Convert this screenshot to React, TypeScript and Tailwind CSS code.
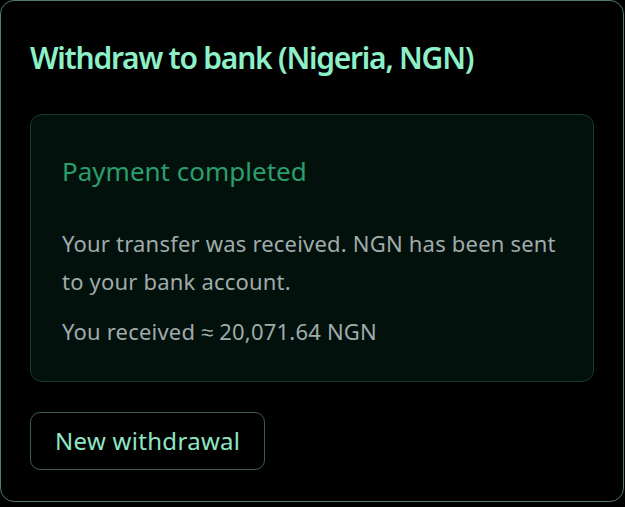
export default function App() {
  return (
    <div className="w-[625px] h-[507px] bg-black font-['Noto_Sans',sans-serif]">
      <div className="w-[624px] h-[502px] rounded-[14px] border border-[#55796b] bg-black px-[29px] pt-[35px]">
        <h1 className="text-[30px] leading-[44px] font-semibold text-[#8ef0c8] tracking-[-1.25px]">
          Withdraw to bank (Nigeria, NGN)
        </h1>

        <div className="mt-[34px] rounded-[12px] border border-[#1b3a2c] bg-[#03110d] px-[31px] pt-[38px] pb-[31px]">
          <h2 className="text-[26px] leading-[36px] text-[#2a9e6b]">Payment completed</h2>
          <p className="mt-[35px] text-[22px] leading-[38px] tracking-[0.2px] text-[#a0abab]">
            Your transfer was received. NGN has been sent to your bank account.
          </p>
          <p className="mt-[12px] text-[22px] leading-[38px] tracking-[0.2px] text-[#a0abab]">
            You received ≈ 20,071.64 NGN
          </p>
        </div>

        <button className="mt-[30px] h-[58px] rounded-[10px] border border-[#3e5d50] px-[24px] text-[24px] tracking-[0.3px] text-[#8ee6c4]">
          New withdrawal
        </button>
      </div>
    </div>
  );
}
